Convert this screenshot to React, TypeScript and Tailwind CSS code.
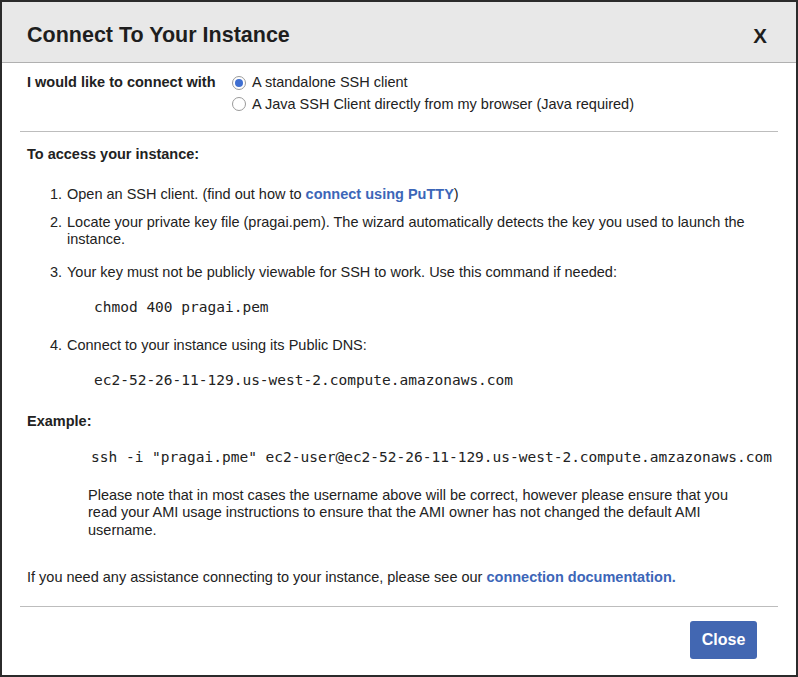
import React from 'react';

const sans = { fontFamily: '"Liberation Sans", Arial, sans-serif' };

const Radio = ({ checked }: { checked?: boolean }) => (
  <span className="inline-flex items-center justify-center w-[14px] h-[14px] rounded-full border border-[#9a9a9a] bg-white shrink-0">
    {checked && <span className="w-[8px] h-[8px] rounded-full bg-[#3f6fd1]" />}
  </span>
);

const Step = ({ n, children }: { n: number; children: React.ReactNode }) => (
  <div className="flex pl-[23px]">
    <span className="w-[17px] shrink-0">{n}.</span>
    <div className="flex-1">{children}</div>
  </div>
);

const Code = ({ children, className = '' }: { children: React.ReactNode; className?: string }) => (
  <div className={`font-['DejaVu_Sans_Mono',monospace] text-[14.5px] leading-[17.5px] whitespace-pre ${className}`}>
    {children}
  </div>
);

export default function App() {
  return (
    <div className="w-[798px] h-[677px] bg-white border-2 border-[#2b2b2b] text-[#222] text-[14.5px] leading-[17.5px] overflow-hidden" style={sans}>
      <div className="h-[61px] bg-[#e8e8e8] border-b border-[#b0b0b0] flex items-center justify-between pl-[25px] pr-[29px]">
        <h1 className="text-[21.5px] font-bold text-[#1e1e1e] pt-[7px]">Connect To Your Instance</h1>
        <button className="text-[20.5px] font-bold text-[#1e1e1e] pt-[7px]">X</button>
      </div>

      <div className="px-[18px]">
        <div className="flex pl-[7px] pt-[9px]">
          <div className="w-[205px] font-bold leading-[19px] pt-[1px]">I would like to connect with</div>
          <div className="flex flex-col">
            <label className="flex items-center gap-[6px] h-[21.5px]">
              <Radio checked />
              <span>A standalone SSH client</span>
            </label>
            <label className="flex items-center gap-[6px] h-[21.5px]">
              <Radio />
              <span>A Java SSH Client directly from my browser (Java required)</span>
            </label>
          </div>
        </div>

        <div className="mt-[16px] h-px bg-[#bdbdbd]" />

        <div className="pl-[7px]">
          <div className="mt-[14px] font-bold">To access your instance:</div>

          <div className="mt-[22px]">
            <Step n={1}>
              Open an SSH client. (find out how to{' '}
              <a className="text-[#3c66b8] font-bold">connect using PuTTY</a>)
            </Step>
          </div>
          <div className="mt-[10.5px]">
            <Step n={2}>
              Locate your private key file (pragai.pem). The wizard automatically detects the key you used to launch the instance.
            </Step>
          </div>
          <div className="mt-[15px]">
            <Step n={3}>Your key must not be publicly viewable for SSH to work. Use this command if needed:</Step>
          </div>
          <Code className="mt-[17.5px] pl-[67px]">chmod 400 pragai.pem</Code>
          <div className="mt-[21px]">
            <Step n={4}>Connect to your instance using its Public DNS:</Step>
          </div>
          <Code className="mt-[17.5px] pl-[67px]">ec2-52-26-11-129.us-west-2.compute.amazonaws.com</Code>

          <div className="mt-[23px] font-bold">Example:</div>
          <Code className="mt-[18.5px] pl-[64px]">ssh -i "pragai.pme" ec2-user@ec2-52-26-11-129.us-west-2.compute.amzazonaws.com</Code>
          <p className="mt-[20.5px] ml-[61px] w-[665px]">
            Please note that in most cases the username above will be correct, however please ensure that you read your AMI usage instructions to ensure that the AMI owner has not changed the default AMI username.
          </p>

          <p className="mt-[29.5px]">
            If you need any assistance connecting to your instance, please see our{' '}
            <a className="text-[#3c66b8] font-bold">connection documentation.</a>
          </p>
        </div>

        <div className="mt-[20px] h-px bg-[#bdbdbd]" />

        <div className="flex justify-end pr-[21px] mt-[14px]">
          <button className="w-[67px] h-[38px] rounded-[3px] bg-[#4267b2] text-white font-bold text-[16px]">Close</button>
        </div>
      </div>
    </div>
  );
}
